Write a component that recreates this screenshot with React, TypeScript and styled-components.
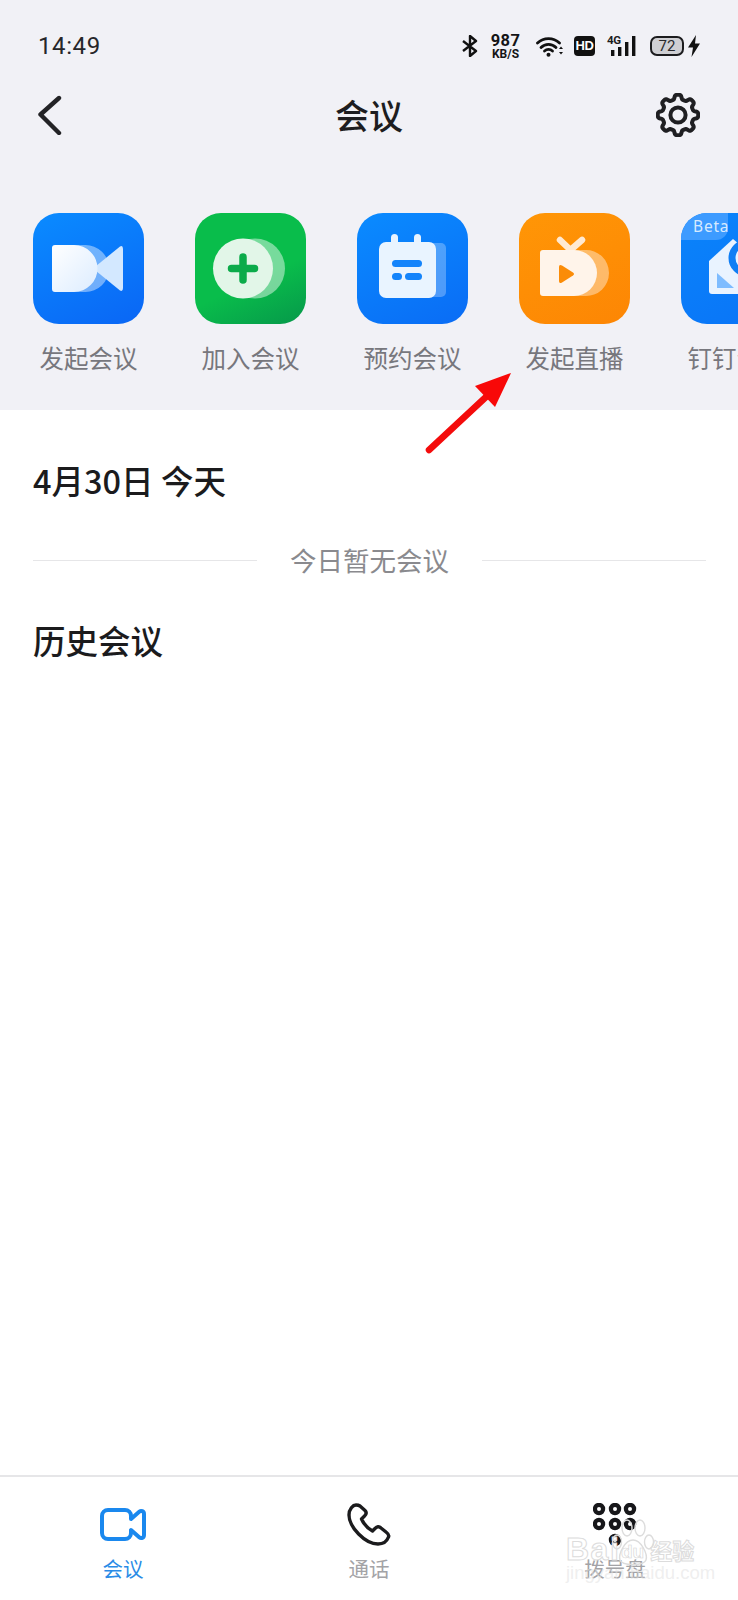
import styled, { createGlobalStyle } from "styled-components";

const GlobalStyle = createGlobalStyle`
  html, body {
    margin: 0;
    padding: 0;
    background: #fff;
  }
  * {
    box-sizing: border-box;
  }
`;

const FONT = `"Noto Sans CJK SC", "Noto Sans", sans-serif`;

const Page = styled.div`
  position: relative;
  width: 738px;
  height: 1600px;
  overflow: hidden;
  display: flex;
  flex-direction: column;
  background: #fff;
  font-family: ${FONT};
`;

const Top = styled.header`
  background: #f1f1f6;
  height: 410px;
  flex: none;
`;

const StatusBar = styled.div`
  height: 85px;
  padding: 7px 37px 0 38px;
  display: flex;
  align-items: center;
  justify-content: space-between;
  color: #1c1c1e;
`;

const Time = styled.span`
  font-family: Roboto, sans-serif;
  font-size: 24px;
  letter-spacing: 0.6px;
  color: #26262a;
`;

const StatusIcons = styled.div`
  display: flex;
  align-items: center;
  height: 24px;
`;

const Speed = styled.div`
  display: flex;
  flex-direction: column;
  align-items: center;
  width: 29px;
  margin: 0 16px 0 13px;
  font-family: Roboto, sans-serif;
  font-weight: 700;
  color: #141416;
`;

const SpeedValue = styled.span`
  font-size: 16.5px;
  line-height: 15px;
  letter-spacing: 0.4px;
`;

const SpeedUnit = styled.span`
  font-size: 12px;
  line-height: 12px;
`;

const HdBadge = styled.span`
  width: 21px;
  height: 20px;
  margin: 0 12px 0 11px;
  border-radius: 4px;
  background: #111;
  color: #fff;
  font-family: "Liberation Sans", sans-serif;
  font-size: 13px;
  font-weight: 700;
  line-height: 20px;
  letter-spacing: -0.5px;
  text-align: center;
`;

const Signal = styled.div`
  display: flex;
  align-items: flex-end;
  width: 30px;
  height: 20px;
  position: relative;
`;

const SignalLabel = styled.span`
  position: absolute;
  left: 0;
  top: -1px;
  font-family: Roboto, sans-serif;
  font-size: 11.5px;
  font-weight: 700;
  line-height: 11px;
  letter-spacing: -0.3px;
`;

const Battery = styled.div`
  width: 34px;
  height: 20px;
  margin-left: 13px;
  border: 2px solid #1c1c1e;
  border-radius: 7px;
  background: #cfcfd3;
  font-family: Roboto, sans-serif;
  font-size: 15px;
  line-height: 16px;
  text-align: center;
  color: #2a2a2c;
`;

const NavBar = styled.nav`
  height: 60px;
  padding: 0 38px;
  display: flex;
  align-items: center;
  justify-content: space-between;
`;

const NavSide = styled.div<{ $end?: boolean }>`
  width: 46px;
  display: flex;
  align-items: center;
  justify-content: ${(p) => (p.$end ? "flex-end" : "flex-start")};
`;

const NavTitle = styled.h1`
  margin: 0;
  font-size: 34px;
  font-weight: 500;
  line-height: 44px;
  color: #1d1d20;
`;

const AppRow = styled.div`
  display: flex;
  gap: 51px;
  padding: 68px 0 0 33px;
`;

const AppItem = styled.div`
  flex: none;
  width: 111px;
  display: flex;
  flex-direction: column;
  align-items: center;
`;

const AppTile = styled.div<{ $from: string; $to: string; $hold?: number }>`
  position: relative;
  width: 111px;
  height: 111px;
  border-radius: 26px;
  overflow: hidden;
  background: linear-gradient(155deg, ${(p) => p.$from} ${(p) => p.$hold ?? 0}%, ${(p) => p.$to});
`;

const BetaTag = styled.span`
  position: absolute;
  left: 0;
  top: 0;
  width: 47px;
  height: 27px;
  padding-left: 12px;
  border-bottom-right-radius: 12px;
  background: #3d9bff;
  color: #d6eaff;
  font-family: "Noto Sans", sans-serif;
  font-size: 15.5px;
  line-height: 27px;
  letter-spacing: 0.8px;
`;

const AppLabel = styled.span`
  margin-top: 17px;
  font-size: 24.5px;
  line-height: 34px;
  white-space: nowrap;
  color: #77777d;
`;

const Content = styled.main`
  flex: 1;
  padding: 48px 32px 0 33px;
`;

const SectionTitle = styled.h2`
  margin: 0;
  font-size: 32.5px;
  font-weight: 500;
  line-height: 44px;
  color: #1b1b1d;
`;

const DividerRow = styled.div`
  display: flex;
  align-items: center;
  height: 40px;
  margin: 38px 0;
`;

const DividerLine = styled.span`
  flex: 1;
  height: 1px;
  background: #e6e6e8;
`;

const DividerText = styled.span`
  padding: 0 33px;
  font-size: 26.5px;
  line-height: 40px;
  color: #8a8a8e;
`;

const TabBar = styled.footer`
  flex: none;
  height: 125px;
  border-top: 2px solid #e6e6e8;
  display: grid;
  grid-template-columns: repeat(3, 1fr);
`;

const Tab = styled.div`
  display: flex;
  flex-direction: column;
  align-items: center;
`;

const TabIcon = styled.div`
  height: 77px;
  padding-top: 31px;
  display: flex;
  justify-content: center;
`;

const TabLabel = styled.span<{ $active?: boolean }>`
  font-size: 20.5px;
  line-height: 28px;
  color: ${(p) => (p.$active ? "#2a8be6" : "#a3a3a6")};
`;

const ArrowMark = styled.svg`
  position: absolute;
  left: 420px;
  top: 365px;
`;

const Watermark = styled.div`
  position: absolute;
  left: 566px;
  top: 1532px;
  width: 140px;
  color: #fff;
  pointer-events: none;
  font-family: "Liberation Sans", sans-serif;
`;

const WatermarkLogo = styled.div`
  display: flex;
  align-items: center;
  height: 34px;
  white-space: nowrap;
  font-size: 32px;
  font-weight: 700;
  letter-spacing: 1.5px;
  -webkit-text-stroke: 1px #dcdcdc;
`;

const WatermarkDu = styled.span`
  position: absolute;
  left: 55px;
  top: 9px;
  font-size: 19px;
  letter-spacing: 0;
  -webkit-text-stroke: 0.6px #d4d4d4;
`;

const WatermarkCjk = styled.span`
  margin-left: 30px;
  font-family: ${FONT};
  font-size: 22px;
  letter-spacing: 0;
`;

const WatermarkUrl = styled.div`
  font-size: 18.5px;
  font-weight: 400;
  line-height: 22px;
  margin-top: -4px;
  color: rgba(225, 225, 225, 0.55);
  white-space: nowrap;
`;

const PawMark = styled.svg`
  position: absolute;
  left: 44px;
  top: -14px;
`;

const BackIcon = () => (
  <svg width="24" height="40" viewBox="0 0 24 40" fill="none">
    <path d="M21 3 L2.5 19.5 L21 38" stroke="#232326" strokeWidth="4.4" strokeLinecap="round" strokeLinejoin="round" />
  </svg>
);

// gear outline is worked out here, 8 lobes are tedious to write by hand
const gearPath = (() => {
  const pts: string[] = [];
  for (let i = 0; i < 160; i++) {
    const a = (i / 160) * Math.PI * 2 + Math.PI / 8;
    const r = 18 + 2.3 * Math.tanh(2.2 * Math.cos(8 * a));
    pts.push(`${(22 + r * Math.cos(a)).toFixed(2)} ${(22 + r * Math.sin(a)).toFixed(2)}`);
  }
  return `M${pts.join("L")}Z`;
})();

const GearIcon = () => (
  <svg width="44" height="44" viewBox="0 0 44 44" fill="none" stroke="#1f1f22" strokeWidth="4">
    <path d={gearPath} strokeLinejoin="round" />
    <circle cx="22" cy="22" r="7.6" />
  </svg>
);

const BluetoothIcon = () => (
  <svg width="16" height="22" viewBox="0 0 16 22" fill="none" stroke="#111" strokeWidth="2.4" style={{ marginLeft: 2 }}>
    <path d="M1 6 L14 16 L8 21 V1 L14 6 L1 16" strokeLinejoin="round" />
  </svg>
);

const WifiIcon = () => (
  <svg width="27" height="21" viewBox="0 0 27 21" fill="none" stroke="#111" strokeWidth="2.8" strokeLinecap="round">
    <path d="M1.5 7 A16 16 0 0 1 23.5 7" />
    <path d="M5 11.5 A10.5 10.5 0 0 1 20 11.5" />
    <path d="M8.5 15 A6 6 0 0 1 16.5 15" />
    <circle cx="12.5" cy="18.7" r="2" fill="#111" stroke="none" />
    <path d="M25 10.5 L23 13 H27 Z M25 18.5 L23 16 H27 Z" fill="#111" stroke="none" />
  </svg>
);

const SignalBars = () => (
  <svg width="30" height="20" viewBox="0 0 30 20" fill="#111">
    <rect x="4" y="14" width="3.4" height="6" />
    <rect x="11" y="11" width="3.4" height="9" />
    <rect x="18" y="6" width="3.4" height="14" />
    <rect x="25" y="0" width="3.4" height="20" />
  </svg>
);

const BoltIcon = () => (
  <svg width="14" height="22" viewBox="0 0 14 22" fill="#111" style={{ marginLeft: 3 }}>
    <path d="M9 0 L1 12.5 H6 L4.5 22 L13 8.5 H8 Z" />
  </svg>
);

const VideoTile = () => (
  <svg width="111" height="111" viewBox="0 0 111 111">
    <defs>
      <linearGradient id="videoBody" x1="0" y1="0" x2="1" y2="1">
        <stop offset="0" stopColor="#fff" />
        <stop offset="1" stopColor="#dcecff" />
      </linearGradient>
    </defs>
    <path d="M30 32 H52 A23.5 23.5 0 0 1 76 55.5 A23.5 23.5 0 0 1 52 79 H30 Z" fill="#fff" opacity="0.42" />
    <path d="M60 55.5 L87 33.5 Q90 32 90 36 V75 Q90 79 87 77.5 Z" fill="#d3e8ff" />
    <path d="M22 32 H41 A23.5 23.5 0 0 1 64.5 55.5 A23.5 23.5 0 0 1 41 79 H22 Q19 79 19 76 V35 Q19 32 22 32 Z" fill="url(#videoBody)" />
  </svg>
);

const JoinTile = () => (
  <svg width="111" height="111" viewBox="0 0 111 111">
    <circle cx="60" cy="55.5" r="30" fill="#fff" opacity="0.45" />
    <circle cx="48" cy="55.5" r="30" fill="#e2f6e8" />
    <path d="M48 44 V67 M36.5 55.5 H59.5" stroke="#0bab4a" strokeWidth="7.5" strokeLinecap="round" />
  </svg>
);

const ScheduleTile = () => (
  <svg width="111" height="111" viewBox="0 0 111 111">
    <rect x="60" y="30" width="29" height="54" rx="5" fill="#fff" opacity="0.28" />
    <rect x="34" y="21" width="7" height="14" rx="3.5" fill="#e8f3ff" />
    <rect x="57" y="21" width="7" height="14" rx="3.5" fill="#e8f3ff" />
    <rect x="22" y="29" width="57" height="56" rx="7" fill="#e9f4ff" />
    <rect x="35" y="47" width="30" height="7" rx="3.5" fill="#1484fb" />
    <rect x="35" y="60" width="10" height="7" rx="3.5" fill="#1484fb" />
    <rect x="48" y="60" width="17" height="7" rx="3.5" fill="#1484fb" />
  </svg>
);

const LiveTile = () => (
  <svg width="111" height="111" viewBox="0 0 111 111">
    <path d="M44 37 H66 A23 23 0 0 1 90 60 A23 23 0 0 1 66 83 H44 Z" fill="#fff" opacity="0.4" />
    <path d="M41 27 L51.5 37 L63 27" fill="none" stroke="#ffe9d2" strokeWidth="6.5" strokeLinecap="round" strokeLinejoin="round" />
    <path d="M24 37 H55 A23 23 0 0 1 78 60 A23 23 0 0 1 55 83 H24 Q21 83 21 80 V40 Q21 37 24 37 Z" fill="#fff4ea" />
    <path d="M40 54 Q40 51 43 52.5 L54 59.5 Q56 61 54 62.5 L43 69.5 Q40 71 40 68 Z" fill="#fb8c08" />
  </svg>
);

const BetaTile = () => (
  <svg width="111" height="111" viewBox="0 0 111 111">
    <path d="M28 48 L52 26 L80 50 V78 Q80 81 77 81 H31 Q28 81 28 78 Z" fill="#e9f3ff" />
    <path d="M36 60 L53 75 H36 Z" fill="#7ebcff" />
    <circle cx="66" cy="45" r="15" fill="#e9f3ff" stroke="#0f7ef5" strokeWidth="7" />
  </svg>
);

const TabVideoIcon = () => (
  <svg width="46" height="33" viewBox="0 0 46 33" fill="none">
    <path
      d="M8 2 H25 a6 6 0 0 1 6 6 V11 L39.5 3.5 C41 2.3 44 3 44 6 V27 C44 30 41 30.7 39.5 29.5 L31 22 V25 a6 6 0 0 1 -6 6 H8 a6 6 0 0 1 -6 -6 V8 a6 6 0 0 1 6 -6 Z"
      stroke="#1a88ee"
      strokeWidth="4"
      strokeLinejoin="round"
    />
  </svg>
);

const TabPhoneIcon = () => (
  <svg width="44" height="43" viewBox="0 0 44 43" fill="none" style={{ marginTop: -5 }}>
    <path
      d="M9 2 C6 2 2 6 2 12 C2 24 18 41 31 41 C36 41 40 38 41.5 34 C42.5 32 41 30.5 39 29 L34 25 C32 23 30 23.5 28 25.5 L25.5 28 C20 25 16.5 20.5 14.5 16 L17.5 13 C19.5 11 19.5 9 18 7.5 L13 3 C11.5 2 10.5 2 9 2 Z"
      stroke="#1b1b1d"
      strokeWidth="3.4"
      strokeLinejoin="round"
    />
  </svg>
);

const DIAL_KEYS = [
  [6, 6], [22, 6], [37, 6],
  [6, 21], [22, 21], [37, 21],
  [22, 37],
];

const TabDialIcon = () => (
  <svg width="44" height="44" viewBox="0 0 44 44" fill="none" stroke="#17171a" strokeWidth="4.2" style={{ marginTop: -5 }}>
    {DIAL_KEYS.map(([cx, cy]) => (
      <circle key={`${cx}-${cy}`} cx={cx} cy={cy} r="4.1" />
    ))}
  </svg>
);

const Arrow = () => (
  <ArrowMark width="100" height="92" viewBox="420 365 100 92">
    <path d="M429 450 L487 396" stroke="#f40c0c" strokeWidth="6.5" strokeLinecap="round" />
    <path d="M511 373 L475 386 L495 407 Z" fill="#f80808" />
  </ArrowMark>
);

const APPS = [
  { label: "发起会议", from: "#0a8bff", to: "#0a66f5", Icon: VideoTile },
  { label: "加入会议", from: "#09bd4b", to: "#06984a", hold: 58, Icon: JoinTile },
  { label: "预约会议", from: "#0a8bff", to: "#0a6cf5", Icon: ScheduleTile },
  { label: "发起直播", from: "#ff9606", to: "#fd8604", Icon: LiveTile },
  { label: "钉钉会议", from: "#0a84fb", to: "#0a74f7", Icon: BetaTile, beta: true },
];

const App = () => {
  return (
    <Page>
      <GlobalStyle />
      <Top>
        <StatusBar>
          <Time>14:49</Time>
          <StatusIcons>
            <BluetoothIcon />
            <Speed>
              <SpeedValue>987</SpeedValue>
              <SpeedUnit>KB/S</SpeedUnit>
            </Speed>
            <WifiIcon />
            <HdBadge>HD</HdBadge>
            <Signal>
              <SignalBars />
              <SignalLabel>4G</SignalLabel>
            </Signal>
            <Battery>72</Battery>
            <BoltIcon />
          </StatusIcons>
        </StatusBar>
        <NavBar>
          <NavSide>
            <BackIcon />
          </NavSide>
          <NavTitle>会议</NavTitle>
          <NavSide $end>
            <GearIcon />
          </NavSide>
        </NavBar>
        <AppRow>
          {APPS.map(({ label, from, to, hold, Icon, beta }) => (
            <AppItem key={label}>
              <AppTile $from={from} $to={to} $hold={hold}>
                <Icon />
                {beta && <BetaTag>Beta</BetaTag>}
              </AppTile>
              <AppLabel>{label}</AppLabel>
            </AppItem>
          ))}
        </AppRow>
      </Top>
      <Content>
        <SectionTitle>4月30日 今天</SectionTitle>
        <DividerRow>
          <DividerLine />
          <DividerText>今日暂无会议</DividerText>
          <DividerLine />
        </DividerRow>
        <SectionTitle>历史会议</SectionTitle>
      </Content>
      <TabBar>
        <Tab>
          <TabIcon>
            <TabVideoIcon />
          </TabIcon>
          <TabLabel $active>会议</TabLabel>
        </Tab>
        <Tab>
          <TabIcon>
            <TabPhoneIcon />
          </TabIcon>
          <TabLabel>通话</TabLabel>
        </Tab>
        <Tab>
          <TabIcon>
            <TabDialIcon />
          </TabIcon>
          <TabLabel>拨号盘</TabLabel>
        </Tab>
      </TabBar>
      <Arrow />
      <Watermark>
        <PawMark width="44" height="50" viewBox="0 0 44 50" fill="none" stroke="#dcdcdc" strokeWidth="1.4">
          <ellipse cx="7" cy="24" rx="4.5" ry="7" />
          <ellipse cx="17" cy="10" rx="5" ry="8" />
          <ellipse cx="30" cy="10" rx="5" ry="8" />
          <ellipse cx="39" cy="24" rx="4.5" ry="7" />
          <path d="M23 22 C15 22 8 36 10 42 C12 48 34 48 36 42 C38 36 31 22 23 22 Z" />
        </PawMark>
        <WatermarkLogo>
          Bai
          <WatermarkDu>du</WatermarkDu>
          <WatermarkCjk>经验</WatermarkCjk>
        </WatermarkLogo>
        <WatermarkUrl>jingyan.baidu.com</WatermarkUrl>
      </Watermark>
    </Page>
  );
};

export default App;
